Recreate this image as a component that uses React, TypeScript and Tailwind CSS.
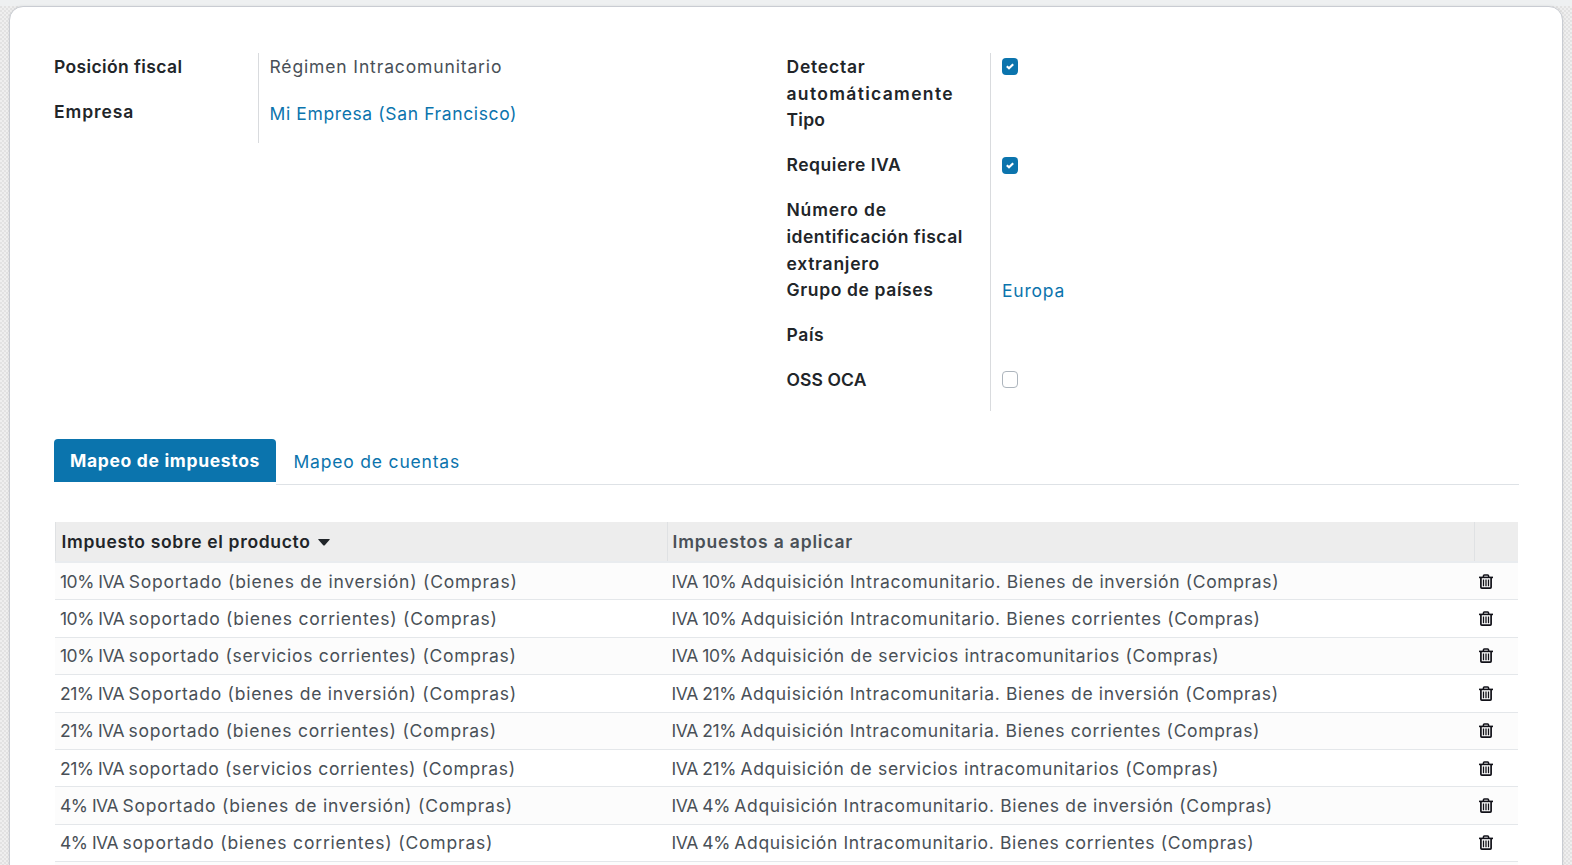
type Row = { rate: string; from: string; to: string; fromClass: string; toClass: string; height: string; pad: string };

const rows: Row[] = [
  { rate: "10%", from: "Soportado (bienes de inversión) (Compras)", to: "Adquisición Intracomunitario. Bienes de inversión (Compras)", fromClass: "tracking-[0.76px]", toClass: "tracking-[0.64px]", height: "h-[37px]", pad: "pt-[5px]" },
  { rate: "10%", from: "soportado (bienes corrientes) (Compras)", to: "Adquisición Intracomunitario. Bienes corrientes (Compras)", fromClass: "tracking-[0.77px]", toClass: "tracking-[0.63px]", height: "h-[38px]", pad: "pt-[5px]" },
  { rate: "10%", from: "soportado (servicios corrientes) (Compras)", to: "Adquisición de servicios intracomunitarios (Compras)", fromClass: "tracking-[0.7px]", toClass: "tracking-[0.68px]", height: "h-[37px]", pad: "pt-[4px]" },
  { rate: "21%", from: "Soportado (bienes de inversión) (Compras)", to: "Adquisición Intracomunitaria. Bienes de inversión (Compras)", fromClass: "tracking-[0.75px]", toClass: "tracking-[0.65px]", height: "h-[38px]", pad: "pt-[5px]" },
  { rate: "21%", from: "soportado (bienes corrientes) (Compras)", to: "Adquisición Intracomunitaria. Bienes corrientes (Compras)", fromClass: "tracking-[0.76px]", toClass: "tracking-[0.64px]", height: "h-[37px]", pad: "pt-[4px]" },
  { rate: "21%", from: "soportado (servicios corrientes) (Compras)", to: "Adquisición de servicios intracomunitarios (Compras)", fromClass: "tracking-[0.69px]", toClass: "tracking-[0.68px]", height: "h-[37px]", pad: "pt-[5px]" },
  { rate: "4%", from: "Soportado (bienes de inversión) (Compras)", to: "Adquisición Intracomunitario. Bienes de inversión (Compras)", fromClass: "tracking-[0.8px]", toClass: "tracking-[0.64px]", height: "h-[38px]", pad: "pt-[5px]" },
  { rate: "4%", from: "soportado (bienes corrientes) (Compras)", to: "Adquisición Intracomunitario. Bienes corrientes (Compras)", fromClass: "tracking-[0.82px]", toClass: "tracking-[0.63px]", height: "h-[37px]", pad: "pt-[4px]" },
];

function Trash() {
  return (
    <svg className="mt-[6px]" width="14" height="16" viewBox="0 0 14 16" fill="none" stroke="#111118" aria-hidden="true">
      <path d="M0 3.4H14" strokeWidth="1.6" />
      <path d="M4.4 3V1.9Q4.4 0.9 5.4 0.9H8.6Q9.6 0.9 9.6 1.9V3" strokeWidth="1.5" />
      <path d="M1.9 4V13.3Q1.9 14.2 2.8 14.2H11.2Q12.1 14.2 12.1 13.3V4" strokeWidth="1.7" />
      <path d="M4.5 5.6V12.2M7 5.6V12.2M9.5 5.6V12.2" strokeWidth="1.3" />
    </svg>
  );
}

function Check({ on }: { on?: boolean }) {
  if (!on) return <span className="block h-[17px] w-4 rounded-[4px] border border-[#adb5bd] bg-white" />;
  return (
    <span className="flex h-[17px] w-4 items-center justify-center rounded-[4px] bg-[#0b74ad]">
      <svg width="8" height="7" viewBox="0 0 8 7" fill="none" stroke="#fff" strokeWidth="2.2" aria-hidden="true">
        <path d="M0.8 3.2L3 5.2L7.2 1.2" />
      </svg>
    </span>
  );
}

const label = "font-semibold text-[#212529] whitespace-nowrap";

export default function App() {
  return (
    <div className="h-[865px] w-[1572px] overflow-hidden bg-[#ececec] bg-[repeating-conic-gradient(#e2e2e2_0_25%,#efefef_0_50%)] bg-size-[4px_4px] font-['Inter',sans-serif] text-[17.5px] leading-[27px] text-[#495057]">
      <div className="h-[890px] bg-[linear-gradient(#eef0f1,#eef0f1)] bg-size-[100%_6px] bg-no-repeat px-[9px] pt-[6px]">
        <main className="h-full rounded-[14px] border border-[#c9ccd2] bg-white pt-[46px] pr-[43px] pl-[44px] shadow-[0_0_3px_rgba(0,0,0,0.08)]">
          <div className="flex h-[386px] items-start">
            <section className="flex w-[732.5px]">
              <div className="h-[90px] w-[205px] border-r border-[#d9dbde]">
                <div className={`${label} h-[45px] tracking-[0.38px]`}>Posición fiscal</div>
                <div className={`${label} tracking-[0.9px]`}>Empresa</div>
              </div>
              <div className="pl-[10.5px]">
                <div className="h-[47px] tracking-[0.86px]">Régimen Intracomunitario</div>
                <a className="tracking-[0.62px] text-[#0b74ad]">Mi Empresa (San Francisco)</a>
              </div>
            </section>
            <section className="flex">
              <div className="h-[358px] w-[204.5px] border-r border-[#d9dbde]">
                <div className={`${label} h-[53px]`}>
                  <span className="tracking-[0.77px]">Detectar</span>
                  <br />
                  <span className="tracking-[1.32px]">automáticamente</span>
                </div>
                <div className={`${label} h-[45px] tracking-[0.25px]`}>Tipo</div>
                <div className={`${label} h-[45px] tracking-[0.53px]`}>Requiere IVA</div>
                <div className={`${label} h-[80px]`}>
                  <span className="tracking-[0.83px]">Número de</span>
                  <br />
                  <span className="tracking-[0.5px]">identificación fiscal</span>
                  <br />
                  <span className="tracking-[0.73px]">extranjero</span>
                </div>
                <div className={`${label} h-[45px] tracking-[0.62px]`}>Grupo de países</div>
                <div className={`${label} h-[45px] tracking-[0.6px]`}>País</div>
                <div className={`${label} tracking-[0.105px]`}>OSS OCA</div>
              </div>
              <div className="flex flex-col pt-[5px] pl-[11px]">
                <div className="h-[99px]"><Check on /></div>
                <div className="h-[120px]"><Check on /></div>
                <div className="h-[94px] tracking-[0.772px] text-[#0b74ad]">Europa</div>
                <Check />
              </div>
            </section>
          </div>

          <nav className="flex h-[46px] items-start">
            <div className="h-[43px] w-[222px] rounded-t-[4px] bg-[#0b74ad] pt-2 pl-4 font-bold tracking-[0.67px] whitespace-nowrap text-white">
              Mapeo de impuestos
            </div>
            <div className="h-[46px] flex-1 border-b border-[#dee2e6] pt-[9px] pl-[17.5px] tracking-[0.81px] text-[#0b74ad]">
              Mapeo de cuentas
            </div>
          </nav>

          <div className="mt-[37px] mr-px ml-px">
            <div className="flex h-[41px] border-b-2 border-[#e9ecef] bg-[#ededed] font-semibold whitespace-nowrap">
              <div className="flex w-[613px] border-x border-[#dfe1e3] pt-[6px] pl-[5.5px] tracking-[0.664px] text-[#212529]">
                Impuesto sobre el producto
                <svg className="mt-[11px] ml-[7.5px]" width="12" height="7" viewBox="0 0 12 7" aria-hidden="true">
                  <path d="M0.6 0H11.4Q12 0.1 11.6 0.7L7 5.9Q6 6.9 5 5.9L0.4 0.7Q0 0.1 0.6 0Z" fill="#212529" />
                </svg>
              </div>
              <div className="w-[807px] border-r border-[#dfe1e3] pt-[6px] pl-[4.5px] tracking-[0.83px]">Impuestos a aplicar</div>
            </div>
            {rows.map((r, i) => (
              <div key={i} className={`${r.height} ${r.pad} flex items-start border-b border-[#e4e7ea] whitespace-nowrap odd:bg-white even:bg-[#fcfcfc]`}>
                <div className={`w-[616px] pl-[5px] ${r.fromClass}`}>
                  <span className="tracking-[-0.5px]">{r.rate} IVA </span>
                  {r.from}
                </div>
                <div className={`w-[808px] pl-[0.5px] ${r.toClass}`}>
                  <span className="tracking-[-0.45px]">IVA {r.rate} </span>
                  {r.to}
                </div>
                <Trash />
              </div>
            ))}
            <div className="h-[37px] bg-[#fcfcfc]" />
          </div>
        </main>
      </div>
    </div>
  );
}
